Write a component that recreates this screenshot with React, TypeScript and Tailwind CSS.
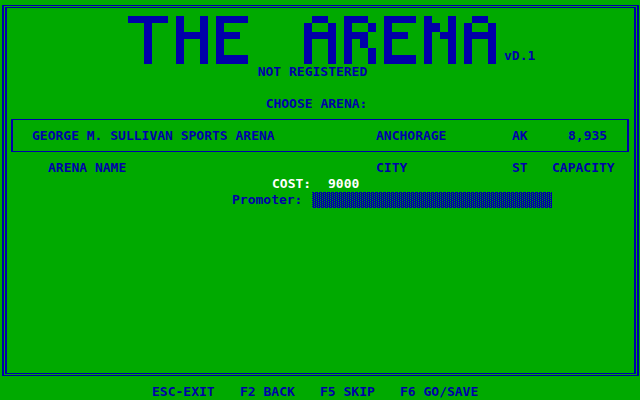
import React from "react";

const BANNER = [
  "#####.#..#.####........##..###..####.#..#..##.",
  "..#...#..#.#..........#..#.#..#.#....##.#.#..#",
  "..#...####.###........####.###..###..#.##.####",
  "..#...#..#.#..........#..#.#.#..#....#..#.#..#",
  "..#...#..#.#..........#..#.#..#.#....#..#.#..#",
  "..#...#..#.####.......#..#.#..#.####.#..#.#..#",
];

// Half-block rows alternate between 7 and 9 pixels in height.
const ROW_TOP = [0, 7, 16, 23, 32, 39, 48];

function Banner() {
  return (
    <svg
      viewBox="0 0 368 48"
      className="h-12 w-[368px] shrink-0 fill-current"
      shapeRendering="crispEdges"
      role="img"
      aria-label="THE ARENA"
    >
      {BANNER.map((row, y) =>
        row.split("").map((cell, x) =>
          cell === "#" ? (
            <rect
              key={`${x}-${y}`}
              x={x * 8}
              y={ROW_TOP[y]}
              width={8}
              height={ROW_TOP[y + 1] - ROW_TOP[y]}
            />
          ) : null
        )
      )}
    </svg>
  );
}

function ArenaTable() {
  return (
    <table className="w-full table-fixed border-separate border-spacing-0 text-left">
      <colgroup>
        <col />
        <col className="w-[136px]" />
        <col className="w-10" />
        <col className="w-[77px]" />
      </colgroup>
      <tbody>
        <tr className="whitespace-nowrap">
          <td className="h-[33px] border-y border-l-2 border-[#0000aa] p-0 pl-[19px]">
            GEORGE M. SULLIVAN SPORTS ARENA
          </td>
          <td className="border-y border-[#0000aa] p-0">ANCHORAGE</td>
          <td className="border-y border-[#0000aa] p-0">AK</td>
          <td className="border-y border-r-2 border-[#0000aa] p-0 pl-4">8,935</td>
        </tr>
      </tbody>
      <tfoot>
        <tr className="whitespace-nowrap">
          <th scope="col" className="p-0 pt-2 pl-[37px]">ARENA NAME</th>
          <th scope="col" className="p-0 pt-2">CITY</th>
          <th scope="col" className="p-0 pt-2">ST</th>
          <th scope="col" className="p-0 pt-2">CAPACITY</th>
        </tr>
      </tfoot>
    </table>
  );
}

export default function App() {
  return (
    <div className="flex min-h-screen flex-col bg-[#00aa00] pt-[5px] font-['DejaVu_Sans_Mono',monospace] text-[13px] leading-4 font-bold text-[#0000aa]">
      <main className="mr-px ml-0.5 flex flex-1 flex-col border-x-2 border-y border-[#0000aa] p-px">
        <div className="flex-1 border-x-2 border-y border-[#0000aa] pt-2">
          <h1 className="flex items-end justify-center gap-2 pl-[23px]">
            <Banner />
            <span className="w-8">vD.1</span>
          </h1>
          <p className="pr-4 text-center">NOT REGISTERED</p>
          <h2 className="mt-4 pr-2 text-center">CHOOSE ARENA:</h2>

          <div className="mt-[7px] pr-[5px] pl-1">
            <ArenaTable />
          </div>

          <form className="flex justify-center pl-[143px]">
            <div className="w-80">
              <p className="flex gap-4 pl-10 text-white">
                <span className="w-10">COST:</span>
                <output>9000</output>
              </p>
              <div className="flex gap-2">
                <label htmlFor="promoter" className="w-[72px]">
                  Promoter:
                </label>
                <input
                  id="promoter"
                  type="text"
                  className="block h-4 min-w-0 flex-1 bg-[#0000aa] bg-[image:conic-gradient(at_1px_1px,transparent_75%,#00aa00_75%),conic-gradient(at_1px_1px,transparent_75%,#00aa00_75%)] bg-[size:4px_2px] bg-[position:2px_0px,0px_1px] px-1 text-white outline-none"
                />
              </div>
            </div>
          </form>
        </div>
      </main>

      <footer className="flex justify-center gap-6 pt-2 pr-2 whitespace-nowrap">
        <button type="button" className="w-16 text-left">ESC-EXIT</button>
        <button type="button" className="w-14 text-left">F2 BACK</button>
        <button type="button" className="w-14 text-left">F5 SKIP</button>
        <button type="button" className="w-20 text-left">F6 GO/SAVE</button>
      </footer>
    </div>
  );
}
